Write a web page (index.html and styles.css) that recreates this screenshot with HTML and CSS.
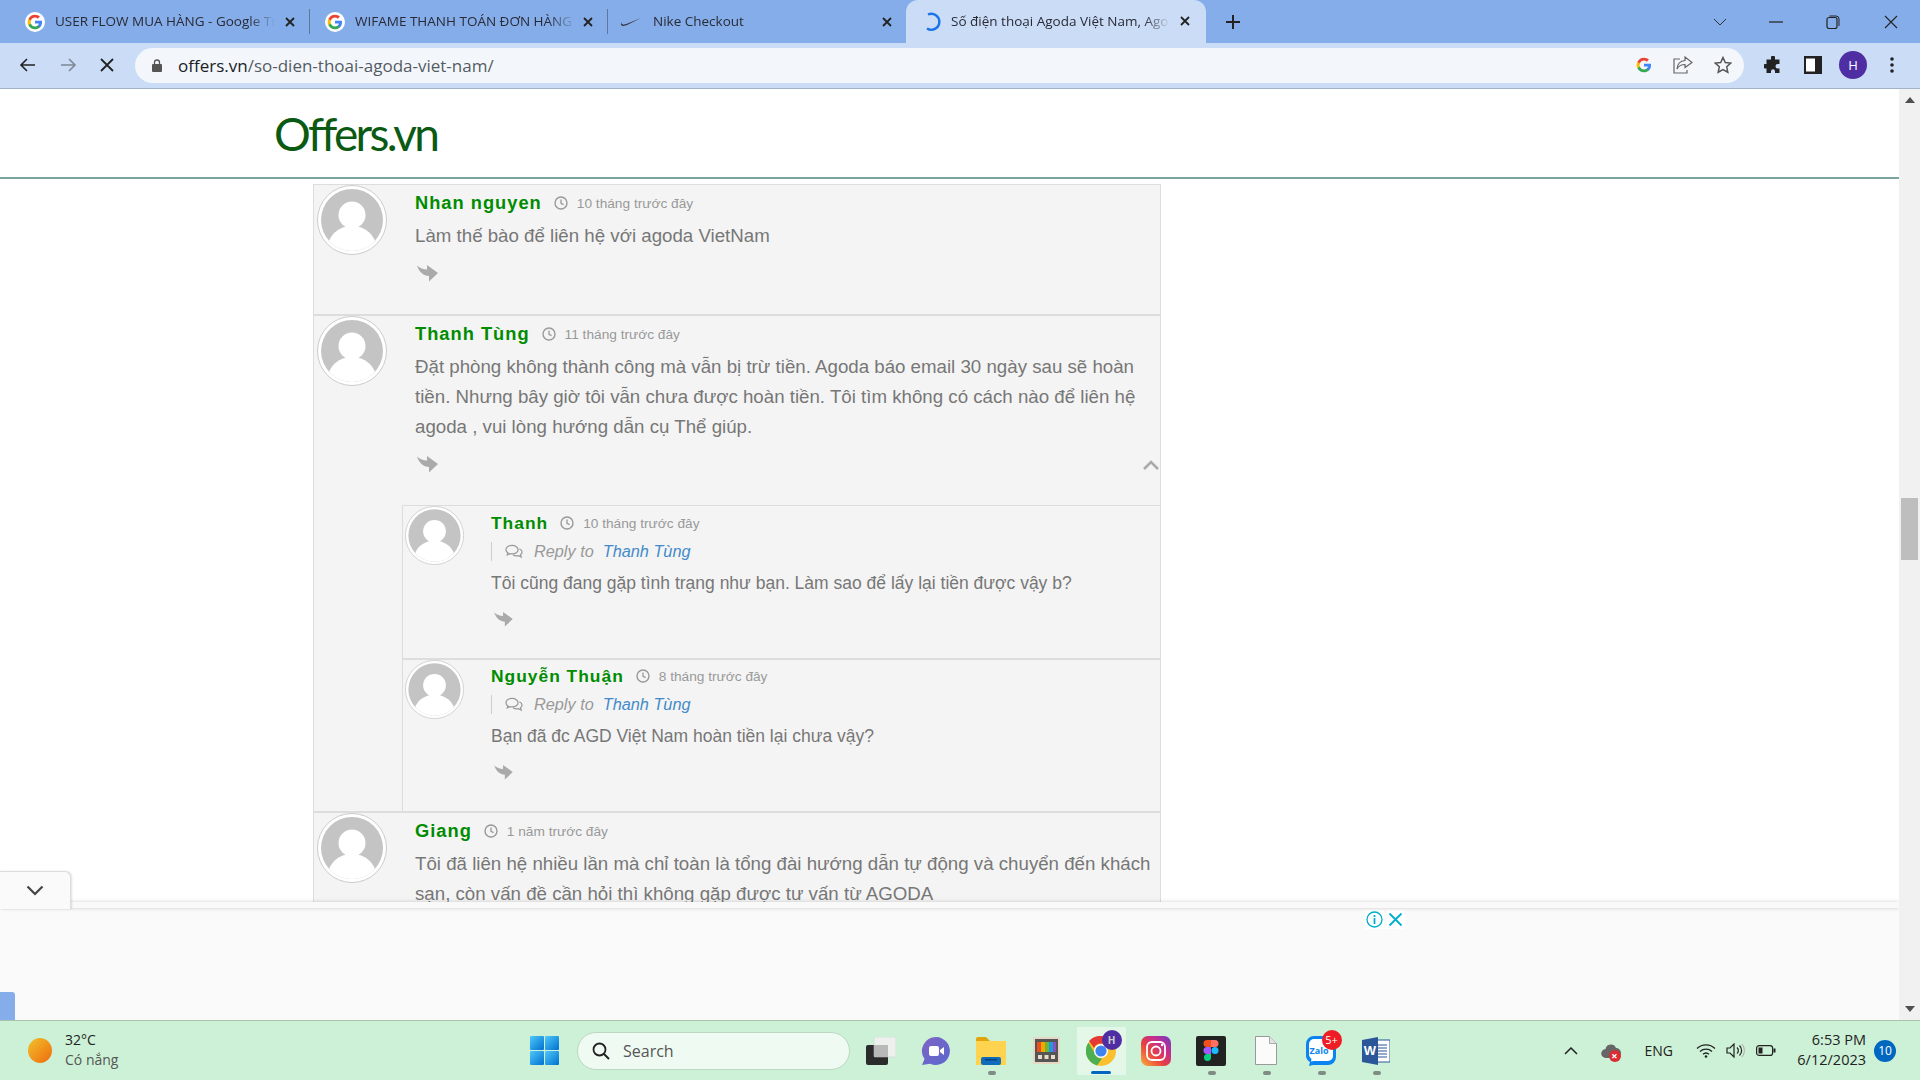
FILE: index.html
```html
<!DOCTYPE html>
<html>
<head>
    <meta charset="utf-8">
    <title>Số điện thoại Agoda Việt Nam</title>
    <link rel="stylesheet" href="styles.css">
</head>
<body>
    <svg class="sprite" width="0" height="0">
        <defs>
            <clipPath id="avatarClip"><circle cx="35" cy="35" r="31"/></clipPath>
            <linearGradient id="winGrad" x1="0" y1="0" x2="1" y2="1"><stop offset="0" stop-color="#4fc8fb"/><stop offset="1" stop-color="#0071cf"/></linearGradient>
            <linearGradient id="chatGrad" x1="0" y1="0" x2="1" y2="1"><stop offset="0" stop-color="#7f64c4"/><stop offset="1" stop-color="#5a68cf"/></linearGradient>
            <linearGradient id="instaGrad" x1="0" y1="1" x2="1" y2="0"><stop offset="0" stop-color="#fbb03b"/><stop offset=".4" stop-color="#e8413f"/><stop offset=".7" stop-color="#c22d91"/><stop offset="1" stop-color="#6a3ec5"/></linearGradient>
        </defs>
        <symbol id="gLogo" viewBox="0 0 24 24">
            <path fill="#4285F4" d="M22.56 12.25c0-.78-.07-1.53-.2-2.25H12v4.26h5.92c-.26 1.37-1.04 2.53-2.21 3.31v2.77h3.57c2.08-1.92 3.28-4.74 3.28-8.09z"/>
            <path fill="#34A853" d="M12 23c2.97 0 5.46-.98 7.28-2.66l-3.57-2.77c-.98.66-2.23 1.06-3.71 1.06-2.86 0-5.29-1.93-6.16-4.53H2.18v2.84C3.99 20.53 7.7 23 12 23z"/>
            <path fill="#FBBC05" d="M5.84 14.09c-.22-.66-.35-1.36-.35-2.09s.13-1.43.35-2.09V7.07H2.18C1.43 8.55 1 10.22 1 12s.43 3.45 1.18 4.93l2.85-2.22.81-.62z"/>
            <path fill="#EA4335" d="M12 5.38c1.62 0 3.06.56 4.21 1.64l3.15-3.15C17.45 2.09 14.97 1 12 1 7.7 1 3.99 3.47 2.18 7.07l3.66 2.84c.87-2.6 3.3-4.53 6.16-4.53z"/>
        </symbol>
        <symbol id="closeX" viewBox="0 0 10 10"><path d="M1 1l8 8M9 1l-8 8" stroke="#222" stroke-width="1.8" fill="none"/></symbol>
        <symbol id="avatar" viewBox="0 0 70 70">
            <circle cx="35" cy="35" r="34.5" fill="#fff" stroke="#ccc"/>
            <circle cx="35" cy="35" r="31" fill="#c4c4c4"/>
            <g clip-path="url(#avatarClip)" fill="#fff">
                <circle cx="35" cy="30" r="13.5"/>
                <ellipse cx="35" cy="62" rx="24" ry="21"/>
            </g>
        </symbol>
        <symbol id="clock" viewBox="0 0 14 14"><circle cx="7" cy="7" r="6" fill="none" stroke="#999" stroke-width="1.4"/><path d="M7 3.4V7.4L9.6 8.6" fill="none" stroke="#999" stroke-width="1.3"/></symbol>
        <symbol id="replyArrow" viewBox="0 0 21 17"><path fill="#aaa" d="M0 .5C3 3 6 4.500 10 4.500L10 0 21 8 12 16.500 12 11C7 11 2 7 0 .5Z"/></symbol>
        <symbol id="chatBubbles" viewBox="0 0 19 15"><g fill="none" stroke="#999" stroke-width="1.300"><path d="M7.500 1C3.900 1 1 3 1 5.600c0 1.400.9 2.600 2.200 3.400L2.400 11l2.600-1.300c.8.2 1.600.3 2.500.3 3.600 0 6.300-2 6.300-4.400S11.100 1 7.500 1z"/><path d="M15.200 4.600c1.700.8 2.800 2 2.800 3.500 0 1.100-.6 2.100-1.600 2.900l.7 2.400-2.800-1.500c-.6.1-1.200.2-1.800.2-1.600 0-3-.4-4-1.200"/></g></symbol>
    </svg>

    <div class="tabstrip">
        <div class="tab tab-first">
            <span class="tab-fav"><svg width="16" height="16"><use href="#gLogo"/></svg></span>
            <span class="tab-title">USER FLOW MUA HÀNG - Google Trang tính</span>
            <svg class="tab-close" width="10" height="10"><use href="#closeX"/></svg>
        </div>
        <div class="tab">
            <span class="tab-fav"><svg width="16" height="16"><use href="#gLogo"/></svg></span>
            <span class="tab-title">WIFAME THANH TOÁN ĐƠN HÀNG - Figma</span>
            <svg class="tab-close" width="10" height="10"><use href="#closeX"/></svg>
        </div>
        <div class="tab tab-last">
            <svg class="tab-swoosh" width="20" height="8" viewBox="0 0 20 8"><path fill="#333" d="M20 0 6 5.800C3.500 6.900 1.300 6.900 .6 5.800.2 5.100.5 4 1.400 3 0 4.600-.5 6.300.4 7.200c1 1 3.200.9 5.600-.1z"/></svg>
            <span class="tab-title">Nike Checkout</span>
            <svg class="tab-close" width="10" height="10"><use href="#closeX"/></svg>
        </div>
        <div class="tab-active">
            <svg class="tab-spin" width="20" height="20" viewBox="0 0 20 20"><path d="M6 2.500A8 8 0 1 1 5 16.500" fill="none" stroke="#1a73e8" stroke-width="2.400"/></svg>
            <span class="tab-title tab-title-active">Số điện thoại Agoda Việt Nam, Agoda hỗ trợ</span>
            <svg class="tab-close" width="10" height="10"><use href="#closeX"/></svg>
        </div>
        <svg class="tab-new" width="14" height="14" viewBox="0 0 14 14"><path d="M7 0v14M0 7h14" stroke="#222" stroke-width="2"/></svg>
        <div class="win-controls">
            <svg width="14" height="8" viewBox="0 0 14 8"><path d="M1 1l6 6 6-6" fill="none" stroke="#333"/></svg>
            <svg class="win-min" width="14" height="2" viewBox="0 0 14 2"><path d="M0 1h14" stroke="#222" stroke-width="1.200"/></svg>
            <svg class="win-max" width="14" height="14" viewBox="0 0 14 14"><rect x="1" y="2.500" width="10" height="11" rx="2" fill="none" stroke="#222" stroke-width="1.200"/><path d="M3.500 1H10a3 3 0 0 1 3 3v7" fill="none" stroke="#222"/></svg>
            <svg class="win-close" width="14" height="14" viewBox="0 0 14 14"><path d="M1 1l12 12M13 1 1 13" stroke="#222" stroke-width="1.100"/></svg>
        </div>
    </div>

    <div class="toolbar">
        <svg class="nav-back" width="16" height="14" viewBox="0 0 16 14"><path d="M16 7H2M8 1 2 7l6 6" fill="none" stroke="#222" stroke-width="1.600"/></svg>
        <svg class="nav-fwd" width="16" height="14" viewBox="0 0 16 14"><path d="M0 7h14M8 1l6 6-6 6" fill="none" stroke="#7f8795" stroke-width="1.600"/></svg>
        <svg class="nav-stop" width="14" height="14" viewBox="0 0 14 14"><path d="M1 1l12 12M13 1 1 13" stroke="#222" stroke-width="1.800"/></svg>
        <div class="omnibox">
            <svg class="lock" width="10" height="13" viewBox="0 0 10 13"><path d="M2.500 5V3.500a2.500 2.500 0 0 1 5 0V5" fill="none" stroke="#555" stroke-width="1.300"/><rect y="5" width="10" height="8" rx="1" fill="#555"/></svg>
            <span class="url"><span class="url-host">offers.vn</span>/so-dien-thoai-agoda-viet-nam/</span>
            <span class="omni-icons">
                <svg width="16" height="16"><use href="#gLogo"/></svg>
                <svg width="20" height="18" viewBox="0 0 20 18"><path d="M12 1l7 5.500-7 5V8.500C8 8.500 5.500 10 4 13c.3-4.500 3-8 8-8.500z" fill="none" stroke="#666" stroke-width="1.200"/><path d="M7 3H1v14h13v-3" fill="none" stroke="#666" stroke-width="1.200"/></svg>
                <svg width="18" height="18" viewBox="0 0 18 18"><path d="M9 1.500l2.300 5 5.400.6-4 3.700 1.100 5.400L9 13.500l-4.800 2.700 1.100-5.400-4-3.700 5.400-.6z" fill="none" stroke="#555" stroke-width="1.500"/></svg>
            </span>
        </div>
        <svg class="tb-ext" width="18" height="18" viewBox="0 0 18 18"><path fill="#222" d="M7 1.500a2 2 0 0 1 4 0V3.500h4.500V8h-1.800a2.200 2.200 0 0 0 0 4.400h1.800V17H11v-1.800a2 2 0 0 0-4 0V17H2.500v-4.600H1a2.200 2.200 0 0 1 0-4.400h1.500V3.500H7z"/></svg>
        <svg class="tb-side" width="18" height="18" viewBox="0 0 18 18"><rect width="18" height="18" fill="#222"/><rect x="2" y="2.500" width="9" height="13" fill="#fff"/></svg>
        <span class="profile">H</span>
        <svg class="tb-menu" width="4" height="16" viewBox="0 0 4 16"><circle cx="2" cy="2" r="1.800" fill="#222"/><circle cx="2" cy="8" r="1.800" fill="#222"/><circle cx="2" cy="14" r="1.800" fill="#222"/></svg>
    </div>

    <div class="viewport">
        <div class="page">
            <div class="scroller">
                <header class="site-header"><span class="logo">Offers.vn</span></header>
                <div class="comments">
                    <div class="comment">
                        <div class="comment-row">
                            <svg class="avatar" width="70" height="70"><use href="#avatar"/></svg>
                            <div class="comment-body">
                                <div class="comment-head">
                                    <span class="author">Nhan nguyen</span>
                                    <svg class="clock" width="14" height="14"><use href="#clock"/></svg>
                                    <span class="when">10 tháng trước đây</span>
                                </div>
                                <p class="text">Làm thế bào để liên hệ với agoda VietNam</p>
                                <div class="actions">
                                    <svg width="21" height="17"><use href="#replyArrow"/></svg>
                                </div>
                            </div>
                        </div>
                    </div>

                    <div class="comment">
                        <div class="comment-row">
                            <svg class="avatar" width="70" height="70"><use href="#avatar"/></svg>
                            <div class="comment-body">
                                <div class="comment-head">
                                    <span class="author">Thanh Tùng</span>
                                    <svg class="clock" width="14" height="14"><use href="#clock"/></svg>
                                    <span class="when">11 tháng trước đây</span>
                                </div>
                                <p class="text">Đặt phòng không thành công mà vẫn bị trừ tiền. Agoda báo email 30 ngày sau sẽ hoàn<br>tiền. Nhưng bây giờ tôi vẫn chưa được hoàn tiền. Tôi tìm không có cách nào để liên hệ<br>agoda , vui lòng hướng dẫn cụ Thể giúp.</p>
                                <div class="actions">
                                    <svg width="21" height="17"><use href="#replyArrow"/></svg>
                                    <svg class="collapse" width="16" height="10" viewBox="0 0 16 10"><path d="M1 9l7-7 7 7" fill="none" stroke="#aaa" stroke-width="2.600"/></svg>
                                </div>
                            </div>
                        </div>
                        <div class="replies">
                            <div class="reply reply-first">
                                <svg class="avatar" width="59" height="59"><use href="#avatar"/></svg>
                                <div class="comment-body">
                                    <div class="comment-head">
                                        <span class="author">Thanh</span>
                                        <svg class="clock" width="14" height="14"><use href="#clock"/></svg>
                                        <span class="when">10 tháng trước đây</span>
                                    </div>
                                    <div class="reply-to">
                                        <svg width="18" height="15"><use href="#chatBubbles"/></svg>
                                        <span class="reply-label">Reply to</span>
                                        <span class="reply-name">Thanh Tùng</span>
                                    </div>
                                    <p class="text text-small">Tôi cũng đang gặp tình trạng như bạn. Làm sao để lấy lại tiền được vậy b?</p>
                                    <div class="actions actions-small">
                                        <svg width="19" height="15"><use href="#replyArrow"/></svg>
                                    </div>
                                </div>
                            </div>
                            <div class="reply">
                                <svg class="avatar" width="59" height="59"><use href="#avatar"/></svg>
                                <div class="comment-body">
                                    <div class="comment-head">
                                        <span class="author">Nguyễn Thuận</span>
                                        <svg class="clock" width="14" height="14"><use href="#clock"/></svg>
                                        <span class="when">8 tháng trước đây</span>
                                    </div>
                                    <div class="reply-to">
                                        <svg width="18" height="15"><use href="#chatBubbles"/></svg>
                                        <span class="reply-label">Reply to</span>
                                        <span class="reply-name">Thanh Tùng</span>
                                    </div>
                                    <p class="text text-small">Bạn đã đc AGD Việt Nam hoàn tiền lại chưa vậy?</p>
                                    <div class="actions actions-small">
                                        <svg width="19" height="15"><use href="#replyArrow"/></svg>
                                    </div>
                                </div>
                            </div>
                        </div>
                    </div>

                    <div class="comment">
                        <div class="comment-row">
                            <svg class="avatar" width="70" height="70"><use href="#avatar"/></svg>
                            <div class="comment-body">
                                <div class="comment-head">
                                    <span class="author">Giang</span>
                                    <svg class="clock" width="14" height="14"><use href="#clock"/></svg>
                                    <span class="when">1 năm trước đây</span>
                                </div>
                                <p class="text">Tôi đã liên hệ nhiều lần mà chỉ toàn là tổng đài hướng dẫn tự động và chuyển đến khách<br>sạn, còn vấn đề cần hỏi thì không gặp được tư vấn từ AGODA</p>
                            </div>
                        </div>
                    </div>
                </div>
            </div>
            <div class="ad-panel">
                <div class="ad-strip"></div>
                <div class="ad-body">
                    <span class="ad-icons">
                        <svg width="19" height="19" viewBox="0 0 19 19"><circle cx="9.500" cy="9.500" r="7.500" fill="none" stroke="#00aecd" stroke-width="1.300"/><path d="M9.500 8v6M9.500 5v2" stroke="#00aecd" stroke-width="1.800"/></svg>
                        <svg width="19" height="19" viewBox="0 0 19 19"><path d="M3.500 3.500l12 12M15.500 3.500l-12 12" stroke="#00aecd" stroke-width="1.800"/></svg>
                    </span>
                </div>
                <span class="ad-toggle"><svg width="18" height="11" viewBox="0 0 18 11"><path d="M1.500 1.500 9 9l7.500-7.500" fill="none" stroke="#444" stroke-width="2.200"/></svg></span>
                <span class="ad-blue"></span>
            </div>
        </div>
        <div class="scrollbar">
            <span class="arrow-up"></span>
            <span class="thumb"></span>
            <span class="arrow-down"></span>
        </div>
    </div>

    <div class="taskbar">
        <div class="weather">
            <span class="sun"></span>
            <div class="weather-text">
                <span class="temp">32°C</span>
                <span class="sky">Có nắng</span>
            </div>
        </div>
        <div class="task-item task-start">
            <svg width="29" height="29" viewBox="0 0 29 29"><g fill="url(#winGrad)"><rect width="14" height="14" rx="1"/><rect x="15" width="14" height="14" rx="1"/><rect y="15" width="14" height="14" rx="1"/><rect x="15" y="15" width="14" height="14" rx="1"/></g></svg>
        </div>
        <div class="search">
            <svg width="18" height="18" viewBox="0 0 18 18"><circle cx="7.500" cy="7.500" r="6" fill="none" stroke="#222" stroke-width="1.800"/><path d="M12 12l5 5" stroke="#222" stroke-width="2"/></svg>
            <span>Search</span>
        </div>
        <div class="task-item">
            <svg width="30" height="28" viewBox="0 0 30 28"><rect y="8" width="22" height="20" rx="2" fill="#2b2b2b"/><rect x="8" width="22" height="20" rx="1" fill="#f1f1f1" fill-opacity=".85" stroke="#ccc" stroke-width=".5"/><rect x="8" y="8" width="14" height="12" fill="#b9b9b9"/></svg>
        </div>
        <div class="task-item">
            <svg width="30" height="30" viewBox="0 0 30 30"><path fill="url(#chatGrad)" d="M15 1a14 14 0 1 1-6 26.700L1 29l2.500-6A14 14 0 0 1 15 1z"/><rect x="8" y="10" width="10" height="10" rx="2" fill="#fff"/><path d="M19 14l4-3v8l-4-3z" fill="#fff"/></svg>
        </div>
        <div class="task-item task-open">
            <svg width="30" height="28" viewBox="0 0 30 28"><path fill="#e0a50d" d="M0 2a2 2 0 0 1 2-2h8l4 4h16v8H0z"/><rect y="4" width="30" height="24" fill="#fdd350"/><rect x="5" y="20" width="20" height="8" rx="2" fill="#0f6cbd"/><rect x="9" y="22" width="12" height="1.500" fill="#0a3f78"/></svg>
        </div>
        <div class="task-item">
            <svg width="27" height="27" viewBox="0 0 27 27"><rect width="27" height="27" fill="#e6d8c4"/><rect x="2" y="2" width="23" height="23" fill="#555"/><rect x="4" y="5" width="4" height="10" fill="#e8501f"/><rect x="8" y="5" width="4" height="10" fill="#f7a600"/><rect x="12" y="5" width="4" height="10" fill="#74b72e"/><rect x="16" y="5" width="4" height="10" fill="#1c9ce0"/><rect x="20" y="5" width="3" height="10" fill="#8a4fc0"/><rect x="5" y="18" width="4" height="4" fill="#e8dcc8"/><rect x="11.500" y="18" width="4" height="4" fill="#e8dcc8"/><rect x="18" y="18" width="4" height="4" fill="#e8dcc8"/></svg>
        </div>
        <div class="task-item task-active">
            <svg width="30" height="30" viewBox="0 0 30 30"><circle cx="15" cy="15" r="15" fill="#fbc02d"/><path fill="#e53935" d="M15 0a15 15 0 0 1 13 7.500H15A7.500 7.500 0 0 0 8 12L3 5A15 15 0 0 1 15 0z"/><path fill="#4caf50" d="M2.500 6.500 9 17.500a7.500 7.500 0 0 0 7 5L11 29.500A15 15 0 0 1 2.500 6.500z"/><circle cx="15" cy="15" r="7" fill="#fff"/><circle cx="15" cy="15" r="5.600" fill="#3d84f0"/></svg>
            <span class="chrome-badge">H</span>
        </div>
        <div class="task-item">
            <svg width="30" height="30" viewBox="0 0 30 30"><rect width="30" height="30" rx="7" fill="url(#instaGrad)"/><rect x="6" y="6" width="18" height="18" rx="5" fill="none" stroke="#fff" stroke-width="1.800"/><circle cx="15" cy="15" r="4.500" fill="none" stroke="#fff" stroke-width="1.800"/><circle cx="21" cy="9" r="1.200" fill="#fff"/></svg>
        </div>
        <div class="task-item task-open">
            <svg width="30" height="30" viewBox="0 0 30 30"><rect width="30" height="30" rx="2" fill="#222"/><path fill="#f24e1e" d="M11 4h4v7h-4a3.500 3.500 0 0 1 0-7z"/><path fill="#ff7262" d="M15 4h4a3.500 3.500 0 0 1 0 7h-4z"/><path fill="#a259ff" d="M11 11h4v7h-4a3.500 3.500 0 0 1 0-7z"/><circle cx="19" cy="14.500" r="3.500" fill="#1abcfe"/><path fill="#0acf83" d="M11 18h4v3.500a3.500 3.500 0 1 1-4-3.500z"/></svg>
        </div>
        <div class="task-item task-open">
            <svg width="22" height="29" viewBox="0 0 22 29"><path d="M.5.500h14l7 7v21H.5z" fill="#fbfbfb" stroke="#999"/><path d="M14.500.500v7h7" fill="#e4e4e4" stroke="#aaa"/></svg>
        </div>
        <div class="task-item task-open">
            <svg width="30" height="30" viewBox="0 0 30 30"><path fill="#0a84f0" d="M8 0h14a8 8 0 0 1 8 8v13a8 8 0 0 1-8 8H7l-4 1 1-4a8 8 0 0 1-4-6V8a8 8 0 0 1 8-8z"/><path fill="#fff" d="M8 3h14a5 5 0 0 1 5 5v12a5 5 0 0 1-5 5H8l-3 .5.500-2.500A6 6 0 0 1 3 19V8a5 5 0 0 1 5-5z"/><text class="zalo-text" x="13" y="18">Zalo</text></svg>
            <span class="zalo-badge">5+</span>
        </div>
        <div class="task-item task-open">
            <svg width="28" height="28" viewBox="0 0 28 28"><rect x="11" y="3" width="17" height="22" fill="#fff" stroke="#2b579a"/><path d="M15 8h10M15 11h10M15 14h10M15 17h10M15 20h10" stroke="#2b579a" stroke-width="1.200"/><path d="M0 3l16-3v28L0 25z" fill="#2b579a"/><text class="word-text" x="8" y="18">W</text></svg>
        </div>
        <div class="tray">
            <svg class="tray-caret" width="14" height="8" viewBox="0 0 14 8"><path d="M1 7l6-6 6 6" fill="none" stroke="#222" stroke-width="1.500"/></svg>
            <span class="tray-cloud">
                <svg width="20" height="14" viewBox="0 0 20 14"><path fill="#666" d="M5 14a4.500 4.500 0 0 1-.5-9A5.500 5.500 0 0 1 15 4a5 5 0 0 1 0 10z"/></svg>
                <span class="cloud-x">×</span>
            </span>
            <span class="tray-lang">ENG</span>
            <svg class="tray-wifi" width="20" height="15" viewBox="0 0 20 15"><path d="M1 5.500a13 13 0 0 1 18 0M4 8.500a9 9 0 0 1 12 0M7 11.300a4.500 4.500 0 0 1 6 0" fill="none" stroke="#222" stroke-width="1.300"/><circle cx="10" cy="13.500" r="1.300" fill="#222"/></svg>
            <svg class="tray-vol" width="20" height="15" viewBox="0 0 20 15"><path d="M1 5h3l4-4v13l-4-4H1z" fill="none" stroke="#222" stroke-width="1.200"/><path d="M11 4.500a4 4 0 0 1 0 6M13.500 2.500a7 7 0 0 1 0 10" fill="none" stroke="#222" stroke-width="1.200"/><path d="M16 1a10 10 0 0 1 0 13" fill="none" stroke="#aaa"/></svg>
            <svg class="tray-batt" width="20" height="11" viewBox="0 0 20 11"><rect x=".6" y=".6" width="16" height="9.800" rx="2.500" fill="none" stroke="#222" stroke-width="1.200"/><rect x="2.500" y="2.500" width="4" height="6" fill="#222"/><rect x="17.500" y="3.500" width="2" height="4" fill="#222"/></svg>
            <div class="tray-clock">
                <span>6:53 PM</span>
                <span>6/12/2023</span>
            </div>
            <span class="notif">10</span>
        </div>
    </div>
</body>
</html>
```

FILE: styles.css
```css
* {
    box-sizing: border-box;
}

html, body {
    margin: 0;
    padding: 0;
}

body {
    width: 1920px;
    height: 1080px;
    overflow: hidden;
    display: flex;
    flex-direction: column;
    font-family: "Liberation Sans", Arial, sans-serif;
    background-color: #fff;
}

.sprite {
    position: absolute;
}

svg {
    display: block;
    flex: none;
}

/* tab strip */
.tabstrip {
    height: 43px;
    flex: none;
    display: flex;
    align-items: center;
    background-color: #84ade9;
    font-family: "Open Sans", sans-serif;
    font-size: 13.5px;
    color: #2a2a35;
}

.tab {
    width: 298px;
    height: 25px;
    flex: none;
    display: flex;
    align-items: center;
    border-right: 1px solid #5f7797;
    padding-left: 15px;
    position: relative;
}

.tab-first {
    width: 310px;
    padding-left: 25px;
}

.tab-last {
    border-right: 0;
    padding-left: 13px;
}

.tab-fav {
    width: 20px;
    height: 20px;
    flex: none;
    display: flex;
    align-items: center;
    justify-content: center;
    background-color: #fff;
    border-radius: 50%;
    margin-right: 10px;
}

.tab-title {
    width: 220px;
    white-space: nowrap;
    overflow: hidden;
    line-height: 22px;
    margin-top: -2px;
    -webkit-mask-image: linear-gradient(to right, #000 88%, transparent);
    mask-image: linear-gradient(to right, #000 88%, transparent);
}

.tab-swoosh {
    margin-right: 12px;
}

.tab-close {
    position: absolute;
    right: 14px;
    top: 8px;
}

.tab-active {
    width: 300px;
    height: 43px;
    flex: none;
    display: flex;
    align-items: center;
    align-self: flex-start;
    padding-left: 16px;
    background-color: #cadcf6;
    border-radius: 12px 12px 0 0;
    position: relative;
}

.tab-spin {
    margin-right: 9px;
}

.tab-title-active {
    width: 219px;
}

.tab-active .tab-close {
    top: 16px;
    right: 16px;
}

.tab-new {
    margin-left: 20px;
}

.win-controls {
    margin-left: auto;
    display: flex;
    align-items: center;
    height: 36px;
    padding-right: 22px;
}

.win-min {
    margin-left: 42px;
}

.win-max {
    margin-left: 43px;
}

.win-close {
    margin-left: 44px;
}

/* toolbar */
.toolbar {
    height: 46px;
    flex: none;
    display: flex;
    align-items: center;
    background-color: #cadcf6;
    border-bottom: 1px solid #a3b2c9;
    padding: 0 0 1px 19px;
}

.nav-fwd {
    margin-left: 26px;
}

.nav-stop {
    margin-left: 23px;
}

.omnibox {
    width: 1609px;
    height: 35px;
    flex: none;
    margin-left: 21px;
    display: flex;
    align-items: center;
    background-color: #f3f7fc;
    border-radius: 18px;
    padding-left: 17px;
}

.lock {
    margin-right: 16px;
}

.url {
    font-family: "Open Sans", sans-serif;
    font-size: 17px;
    color: #555b63;
}

.url-host {
    color: #202124;
}

.omni-icons {
    margin-left: auto;
    display: flex;
    align-items: center;
    gap: 21px;
    padding-right: 12px;
}

.tb-ext {
    margin-left: 20px;
}

.tb-side {
    margin-left: 22px;
}

.profile {
    width: 28px;
    height: 28px;
    flex: none;
    margin-left: 17px;
    border-radius: 50%;
    background-color: #4f2ea3;
    color: #fff;
    font-family: "Open Sans", sans-serif;
    font-size: 13px;
    display: flex;
    align-items: center;
    justify-content: center;
}

.tb-menu {
    margin-left: 23px;
}

/* page */
.viewport {
    height: 931px;
    flex: none;
    display: flex;
}

.page {
    width: 1899px;
    flex: none;
    display: flex;
    flex-direction: column;
    position: relative;
}

.scroller {
    height: 813px;
    flex: none;
    overflow: hidden;
}

.site-header {
    height: 90px;
    border-bottom: 2px solid #7ba3a0;
    padding-left: 274px;
}

.logo {
    display: block;
    font-family: Lato, sans-serif;
    font-weight: 400;
    font-size: 46px;
    line-height: 90px;
    color: #0b5a13;
    letter-spacing: -2.7px;
}

.comments {
    width: 848px;
    margin: 5px 0 0 313px;
    background-color: #f4f4f4;
    border: 1px solid #ddd;
    border-bottom: 0;
}

.comment {
    border-bottom: 2px solid #ddd;
    padding-left: 3px;
}

.comment-row {
    display: flex;
}

.avatar {
    margin-right: 28px;
}

.comment-body {
    flex: 1;
    min-width: 0;
    padding-top: 4px;
}

.comment-head {
    height: 28px;
    display: flex;
    align-items: center;
}

.author {
    font-size: 18.3px;
    font-weight: bold;
    letter-spacing: 1px;
    color: #008c00;
}

.clock {
    margin-left: 12px;
}

.when {
    margin-left: 9px;
    font-size: 13.7px;
    color: #999;
}

.text {
    margin: 4px 0 0;
    font-size: 18.7px;
    line-height: 30px;
    color: #777;
    white-space: nowrap;
}

.actions {
    margin: 14px 0 32px 2px;
    display: flex;
    justify-content: space-between;
    padding-right: 1px;
    height: 17px;
    align-items: center;
}

/* nested replies */
.replies {
    margin-left: 85px;
}

.reply {
    display: flex;
    border-left: 1px solid #ddd;
    border-top: 2px solid #ddd;
    padding-left: 2px;
    height: 153px;
}

.reply-first {
    border-top-width: 1px;
}

.reply .avatar {
    margin-right: 27px;
}

.reply .comment-body {
    padding-top: 2px;
}

.reply-first .comment-body {
    padding-top: 3px;
}

.reply .author {
    font-size: 17.4px;
}

.reply-to {
    height: 19px;
    margin-top: 5px;
    display: flex;
    align-items: center;
    border-left: 1px solid #ccc;
    padding-left: 13px;
    font-size: 16.3px;
    font-style: italic;
}

.reply-label {
    margin-left: 11px;
    color: #999;
}

.reply-name {
    margin-left: 9px;
    color: #428bca;
}

.text-small {
    margin-top: 7px;
    font-size: 17.5px;
}

.actions-small {
    margin: 14px 0 0 3px;
    height: 15px;
}

/* bottom ad bar */
.ad-panel {
    flex: 1;
    display: flex;
    flex-direction: column;
    position: relative;
}

.ad-strip {
    height: 6px;
    flex: none;
    background-color: #f9f9f9;
    box-shadow: 0 0 4px rgba(0, 0, 0, 0.18);
    position: relative;
}

.ad-body {
    flex: 1;
    background-color: #fafafa;
    padding: 2px 0 0 1365px;
}

.ad-icons {
    display: flex;
    gap: 2px;
}

.ad-icons svg {
    background-color: #fff;
}

.ad-toggle {
    position: absolute;
    left: 0;
    top: -31px;
    width: 71px;
    height: 38px;
    display: flex;
    align-items: flex-start;
    justify-content: center;
    padding-top: 13px;
    background-color: #fafafa;
    border: 1px solid #ddd;
    border-left: 0;
    border-bottom: 0;
    border-radius: 0 6px 0 0;
    box-shadow: 1px 0 2px rgba(0, 0, 0, 0.12);
}

.ad-blue {
    position: absolute;
    left: 0;
    bottom: 0;
    width: 15px;
    height: 28px;
    background-color: #84ade9;
    border-radius: 0 3px 0 0;
}

/* scrollbar */
.scrollbar {
    width: 21px;
    flex: none;
    background-color: #f1f1f1;
    position: relative;
}

.arrow-up, .arrow-down {
    position: absolute;
    left: 6px;
    width: 0;
    height: 0;
    border-left: 5px solid transparent;
    border-right: 5px solid transparent;
}

.arrow-up {
    top: 8px;
    border-bottom: 6px solid #505050;
}

.arrow-down {
    bottom: 8px;
    border-top: 6px solid #505050;
}

.thumb {
    position: absolute;
    left: 2px;
    top: 409px;
    width: 17px;
    height: 62px;
    background-color: #bebebe;
}

/* taskbar */
.taskbar {
    height: 60px;
    flex: none;
    display: flex;
    align-items: center;
    padding-left: 28px;
    background-color: #cdf1d6;
    border-top: 1px solid #a8c4ad;
    font-family: "Open Sans", sans-serif;
    color: #222;
}

.weather {
    width: 489.5px;
    flex: none;
    display: flex;
    align-items: center;
}

.sun {
    width: 24px;
    height: 25px;
    border-radius: 50%;
    background: linear-gradient(135deg, #f2c22c, #ee6a0c);
    margin-right: 13px;
}

.weather-text {
    display: flex;
    flex-direction: column;
    font-size: 14px;
    line-height: 20px;
    margin-top: -1px;
}

.sky {
    color: #555;
}

.task-item {
    width: 55px;
    height: 48px;
    flex: none;
    display: flex;
    align-items: center;
    justify-content: center;
    position: relative;
}

.task-start svg {
    margin-right: 2px;
}

.task-open::after {
    content: "";
    position: absolute;
    left: 24px;
    bottom: 0;
    width: 8px;
    height: 4px;
    border-radius: 2px;
    background-color: #7f8c83;
}

.task-active {
    background: linear-gradient(to right, transparent 3.5px, rgba(255, 255, 255, 0.45) 3.5px, rgba(255, 255, 255, 0.45) 51.5px, transparent 51.5px);
    border-radius: 4px;
}

.task-active::after {
    content: "";
    position: absolute;
    left: 17px;
    bottom: 1px;
    width: 20px;
    height: 3px;
    border-radius: 2px;
    background-color: #0067c0;
}

.chrome-badge {
    position: absolute;
    left: 28px;
    top: 3px;
    width: 20px;
    height: 20px;
    border-radius: 50%;
    background-color: #4f2ea3;
    color: #ccc;
    font-size: 10px;
    font-weight: bold;
    display: flex;
    align-items: center;
    justify-content: center;
}

.zalo-text {
    font-family: "Open Sans", sans-serif;
    font-size: 9px;
    font-weight: bold;
    fill: #0a84f0;
    text-anchor: middle;
}

.zalo-badge {
    position: absolute;
    left: 28px;
    top: 3px;
    width: 20px;
    height: 20px;
    border-radius: 50%;
    background-color: #ee1c24;
    color: #fff;
    font-size: 11px;
    display: flex;
    align-items: center;
    justify-content: center;
}

.word-text {
    font-family: "Liberation Sans", sans-serif;
    font-size: 13px;
    font-weight: bold;
    fill: #fff;
    text-anchor: middle;
}

.search {
    width: 273px;
    height: 38px;
    flex: none;
    margin: 0 3.5px 0 4.5px;
    display: flex;
    align-items: center;
    gap: 13px;
    padding-left: 14px;
    background-color: #effbf2;
    border: 1px solid #bcd8c2;
    border-radius: 19px;
    font-size: 16px;
    color: #555;
}

.tray {
    margin-left: auto;
    display: flex;
    align-items: center;
    padding-right: 24px;
    height: 100%;
}

.tray-cloud {
    margin-left: 23px;
    position: relative;
}

.cloud-x {
    position: absolute;
    left: 8px;
    top: 6px;
    width: 12px;
    height: 12px;
    border-radius: 50%;
    background-color: #d92c34;
    color: #fff;
    font-size: 11px;
    line-height: 12px;
    text-align: center;
    font-weight: bold;
}

.tray-lang {
    margin-left: 24px;
    font-size: 14px;
}

.tray-wifi {
    margin-left: 23px;
}

.tray-vol {
    margin-left: 10px;
}

.tray-batt {
    margin-left: 10px;
}

.tray-clock {
    width: 90px;
    display: flex;
    flex-direction: column;
    align-items: flex-end;
    font-size: 14.5px;
    line-height: 20px;
    margin-top: -2px;
}

.notif {
    width: 22px;
    height: 22px;
    margin-left: 8px;
    border-radius: 50%;
    background-color: #0067c0;
    color: #fff;
    font-size: 12px;
    display: flex;
    align-items: center;
    justify-content: center;
}
```
